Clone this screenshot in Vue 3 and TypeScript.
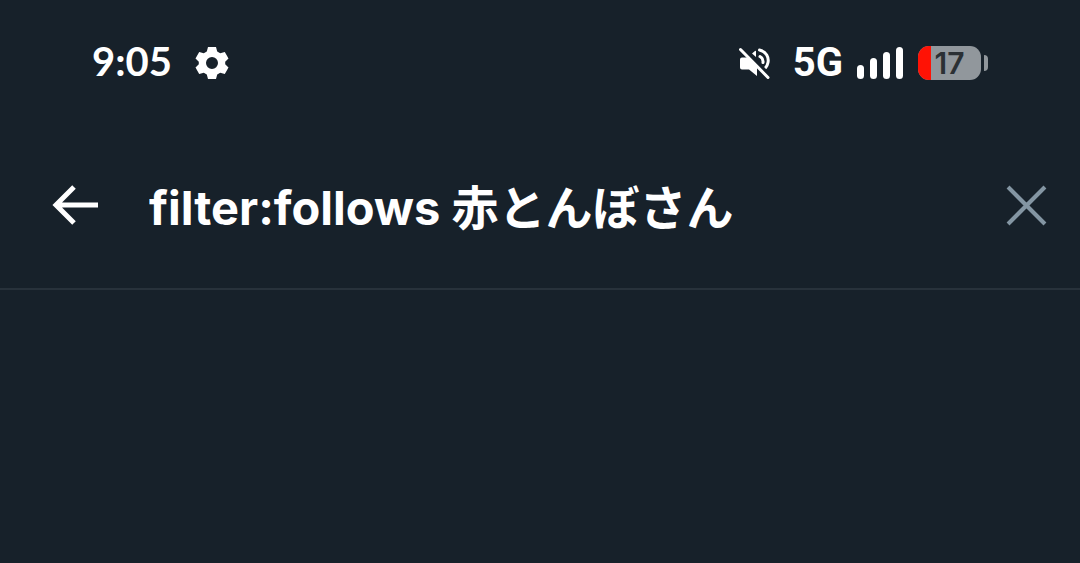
<script setup lang="ts">
import { ref } from 'vue'

const query = ref<string>('filter:follows 赤とんぼさん')
const batteryLevel = ref<number>(17)
const signalBars: string[] = ['b1', 'b2', 'b3', 'b4']

function clearQuery(): void {
  query.value = ''
}
</script>

<template>
  <div class="screen">
    <div class="status">
      <time class="clock">9:05</time>
      <svg class="gear" viewBox="0 0 34 34" aria-hidden="true">
        <path
          fill-rule="evenodd"
          d="M13 1h8l1.200 4.500 3 1.800 4.600-1.300 3.700 6.500-3.300 3.200v2.600l3.300 3.200-3.700 6.500-4.600-1.300-3 1.800L21 33h-8l-1.200-4.500-3-1.800L4.200 28 .5 21.500l3.300-3.200v-2.600L.5 12.500 4.200 6l4.600 1.300 3-1.800zM17 11a6 6 0 1 0 0 12 6 6 0 0 0 0-12z"
        />
      </svg>
      <div class="spacer"></div>
      <svg class="mute" viewBox="0 0 32 34" aria-label="Muted">
        <path class="solid" d="M3 11.500h6L18 20v10l-8-6.500H3q-2 0-2-2v-8q0-2 2-2zM13 7.500l3-2.500q1-.5 1 .5V11z" />
        <path class="wave" d="M20.500 4c7 1.500 9.500 7.500 8.500 12.500q-.6 3-2.300 5" />
        <path class="inner" d="M21 10.500q3.500 2 3 6" />
        <path class="gap" d="M3.500 1.500l29 29" />
        <path class="slash" d="M1.500 3.500l27.500 28" />
      </svg>
      <span class="network">5G</span>
      <div class="signal" role="img" aria-label="Signal strength">
        <i v-for="bar in signalBars" :key="bar" :class="bar"></i>
      </div>
      <div class="battery">
        <div class="cell">
          <div class="charge" :style="{ width: batteryLevel + '%' }"></div>
          <span class="level">{{ batteryLevel }}</span>
        </div>
        <div class="cap"></div>
      </div>
    </div>
    <form class="search" role="search" @submit.prevent>
      <button class="icon-button" type="button" aria-label="Back">
        <svg class="arrow" viewBox="0 0 48 40" aria-hidden="true">
          <path d="M46 20H4M22 2L4 20l18 18" />
        </svg>
      </button>
      <input v-model="query" class="query" type="text" aria-label="Search" spellcheck="false" />
      <button class="icon-button" type="button" aria-label="Clear" @click="clearQuery">
        <svg class="cross" viewBox="0 0 40 40" aria-hidden="true">
          <path d="M2 2l36 36M38 2L2 38" />
        </svg>
      </button>
    </form>
    <main class="results"></main>
  </div>
</template>

<style>
body {
  background: #17212a;
}
</style>

<style scoped>
.screen {
  min-height: 100vh;
  box-sizing: border-box;
  display: flex;
  flex-direction: column;
  background: #17212a;
  color: #fff;
  font-family: Lato, "Noto Sans CJK JP", sans-serif;
}
.status {
  display: flex;
  align-items: center;
  height: 126px;
  padding: 0 92px;
}
.clock {
  padding-bottom: 4px;
  font-size: 40px;
  line-height: 40px;
  font-weight: 700;
}
.gear {
  width: 34px;
  height: 34px;
  margin-left: 23px;
  fill: #fff;
}
.spacer {
  flex: 1;
}
.mute {
  width: 32px;
  height: 34px;
  fill: none;
  stroke-linecap: round;
}
.mute .solid {
  fill: #fff;
}
.mute .wave {
  stroke: #fff;
  stroke-width: 3;
}
.mute .inner {
  stroke: #fff;
  stroke-width: 3;
}
.mute .gap {
  stroke: #17212a;
  stroke-width: 3;
}
.mute .slash {
  stroke: #fff;
  stroke-width: 3;
}
.network {
  margin-left: 22px;
  font-family: Roboto, sans-serif;
  font-size: 40px;
  line-height: 44px;
  font-weight: 700;
}
.signal {
  display: flex;
  align-items: flex-end;
  gap: 6px;
  height: 32px;
  margin-left: 14px;
}
.signal i {
  width: 7px;
  border-radius: 4px;
  background: #fff;
}
.b1 {
  height: 14px;
}
.b2 {
  height: 21px;
}
.b3 {
  height: 27px;
}
.b4 {
  height: 32px;
}
.battery {
  display: flex;
  align-items: center;
  gap: 3px;
  margin-left: 15px;
}
.cell {
  position: relative;
  display: flex;
  align-items: center;
  justify-content: center;
  width: 63px;
  height: 34px;
  border-radius: 11px;
  background: #91979c;
}
.charge {
  position: absolute;
  inset: 0 auto 0 0;
  min-width: 13px;
  border-radius: 11px 0 0 11px;
  background: #ff1205;
}
.level {
  position: relative;
  color: #2b3034;
  font-family: Inter, sans-serif;
  font-size: 30px;
  line-height: 34px;
  font-weight: 600;
}
.cap {
  width: 4px;
  height: 16px;
  border-radius: 0 4px 4px 0;
  background: #91979c;
}
.search {
  display: flex;
  align-items: center;
  height: 158px;
  padding: 0 33px 4px 52px;
  border-bottom: 2px solid #28323b;
}
.icon-button {
  display: flex;
  padding: 0;
  border: 0;
  background: none;
  cursor: pointer;
}
.arrow {
  width: 48px;
  height: 40px;
  fill: none;
  stroke: #fff;
  stroke-width: 5;
}
.cross {
  width: 41px;
  height: 41px;
  fill: none;
  stroke: #8496a3;
  stroke-width: 4;
}
.query {
  flex: 1;
  min-width: 0;
  margin: 0 24px 0 49px;
  padding: 6px 0 0;
  border: 0;
  outline: 0;
  background: none;
  color: #fff;
  font-family: Inter, "Noto Sans CJK JP", sans-serif;
  font-size: 47px;
  line-height: 68px;
  font-weight: 700;
}
.results {
  flex: 1;
}
</style>
